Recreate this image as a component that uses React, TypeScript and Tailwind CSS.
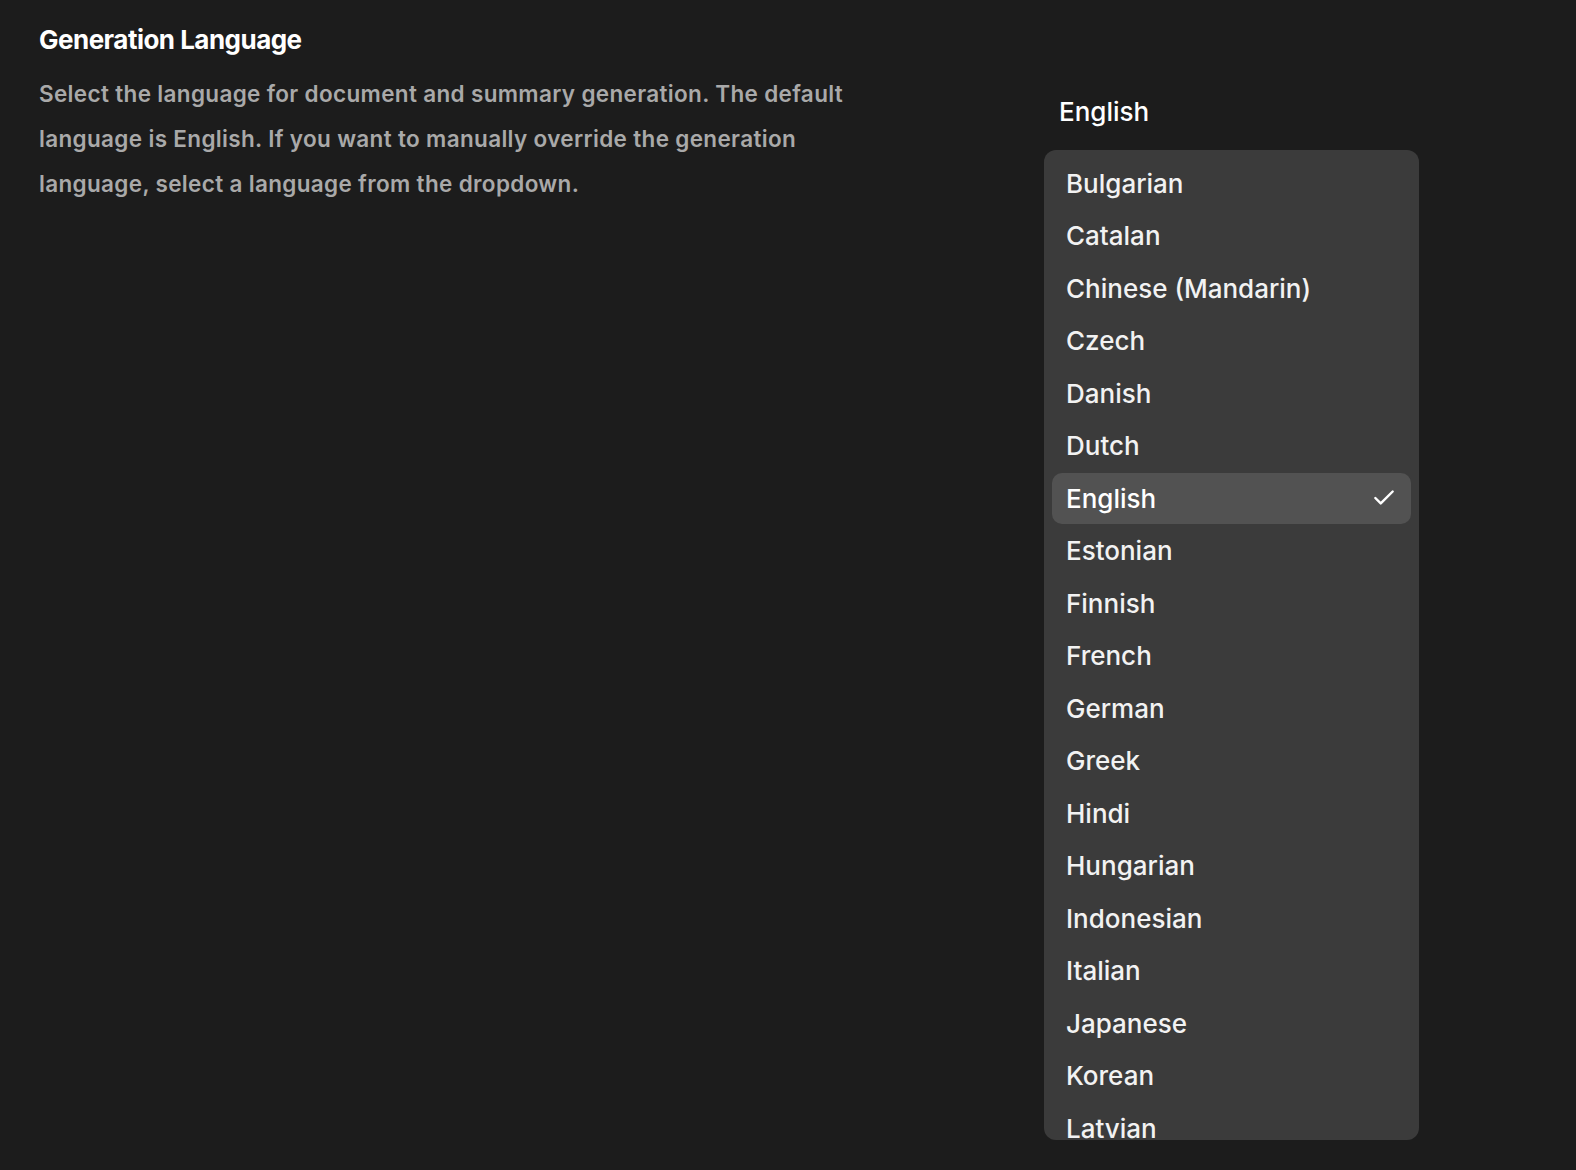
import { Check } from "lucide-react";

const languages = [
  "Bulgarian",
  "Catalan",
  "Chinese (Mandarin)",
  "Czech",
  "Danish",
  "Dutch",
  "English",
  "Estonian",
  "Finnish",
  "French",
  "German",
  "Greek",
  "Hindi",
  "Hungarian",
  "Indonesian",
  "Italian",
  "Japanese",
  "Korean",
  "Latvian",
  "Lithuanian",
  "Norwegian",
];

const App = () => {
  const selected = "English";

  return (
    <div className="min-h-screen bg-[#1c1c1c] font-['Inter',sans-serif] text-white">
      <div className="flex pl-[39px] pt-[25px]">
        {/* Left: title + description */}
        <div className="w-[835px] shrink-0">
          <h2 className="text-[26px] font-bold leading-[30px] tracking-[-0.02em] text-white">
            Generation Language
          </h2>
          <p className="mt-[16px] text-[22.5px] font-semibold leading-[45px] tracking-[0.015em] text-[#a9a9a9]">
            Select the language for document and summary generation. The default
            <br />
            language is English. If you want to manually override the generation
            <br />
            language, select a language from the dropdown.
          </p>
        </div>

        {/* Right: select */}
        <div className="ml-[170px] flex w-[375px] shrink-0 flex-col">
          <div className="mt-[72px] pl-[15px] text-[26px] font-medium leading-[30px] text-white">{selected}</div>
          <div className="mt-[23px] h-[990px] shrink-0 overflow-hidden rounded-[12px] bg-[#3b3b3b] px-[8px] pt-[8px]">
            <ul className="flex flex-col gap-[2px]">
              {languages.map((lang) => (
                <li
                  key={lang}
                  className={
                    lang === selected
                      ? "flex h-[50.5px] shrink-0 items-center justify-between rounded-[10px] bg-[#525252] pl-[14px] pr-[14px] text-[26px] font-medium text-white"
                      : "flex h-[50.5px] shrink-0 items-center justify-between rounded-[10px] pl-[14px] pr-[14px] text-[26px] font-medium text-[#f2f2f2]"
                  }
                >
                  <span>{lang}</span>
                  {lang === selected && <Check className="h-[26px] w-[26px] text-white" strokeWidth={2.25} />}
                </li>
              ))}
            </ul>
          </div>
        </div>
      </div>
    </div>
  );
};

export default App;
